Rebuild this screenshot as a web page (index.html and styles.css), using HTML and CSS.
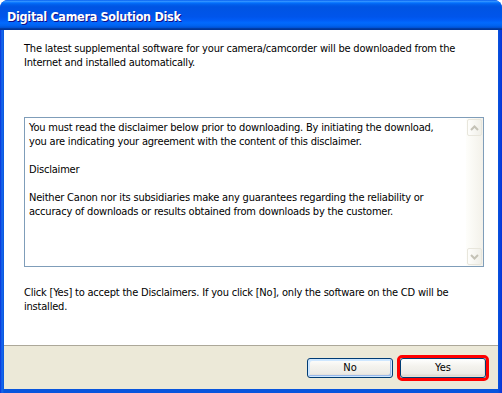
FILE: index.html
```html
<!DOCTYPE html>
<html lang="en">
<head>
    <meta charset="UTF-8">
    <meta name="viewport" content="width=device-width, initial-scale=1.0">
    <title>Digital Camera Solution Disk</title>
    <link rel="stylesheet" href="styles.css">
</head>
<body>
    <div class="window">
        <!-- title bar -->
        <div class="titlebar">
            <span class="title">Digital Camera Solution Disk</span>
        </div>

        <div class="frame">
            <div class="content">
                <p class="intro">The latest supplemental software for your camera/camcorder will be downloaded from the Internet and installed automatically.</p>

                <!-- disclaimer box -->
                <div class="textbox">
                    <div class="textbox-text">
                        <p>You must read the disclaimer below prior to downloading. By initiating the download, you are indicating your agreement with the content of this disclaimer.</p>
                        <p>Disclaimer</p>
                        <p>Neither Canon nor its subsidiaries make any guarantees regarding the reliability or accuracy of downloads or results obtained from downloads by the customer.</p>
                    </div>
                    <div class="scrollbar">
                        <span class="arrow">
                            <svg width="9" height="6" viewBox="0 0 9 6"><polyline points="1,5 4.5,1.5 8,5" fill="none" stroke="#c4c2b6" stroke-width="2"/></svg>
                        </span>
                        <span class="track"></span>
                        <span class="arrow">
                            <svg width="9" height="6" viewBox="0 0 9 6"><polyline points="1,1 4.5,4.5 8,1" fill="none" stroke="#c4c2b6" stroke-width="2"/></svg>
                        </span>
                    </div>
                </div>

                <p class="note">Click [Yes] to accept the Disclaimers. If you click [No], only the software on the CD will be installed.</p>
            </div>

            <!-- buttons -->
            <div class="footer">
                <button class="btn btn-default">No</button>
                <span class="highlight">
                    <button class="btn">Yes</button>
                </span>
            </div>
        </div>
    </div>
</body>
</html>
```

FILE: styles.css
```css
body {
    margin: 0;
    background-color: #fff;
    font-family: "DejaVu Sans Condensed", "Liberation Sans", sans-serif;
    font-size: 11px;
    letter-spacing: -0.2px;
    color: #000;
}

.window {
    width: 502px;
    height: 393px;
    display: flex;
    flex-direction: column;
    border-radius: 8px 8px 0 0;
    overflow: hidden;
    background-color: #0841d9;
}

.titlebar {
    height: 30px;
    flex: none;
    display: flex;
    align-items: center;
    padding-left: 7px;
    background: linear-gradient(180deg, #0058ee 0%, #3593ff 4%, #288eff 6%, #127dff 8%, #036ffc 10%, #0262ee 14%, #0057e5 20%, #0054e3 24%, #0055eb 56%, #005bf5 66%, #026afe 76%, #0062ef 86%, #0052d6 92%, #0040ab 94%, #003092 100%);
}

.title {
    color: #fff;
    font-family: "DejaVu Sans Condensed", "DejaVu Sans", sans-serif;
    font-weight: bold;
    font-size: 12.5px;
    letter-spacing: -0.3px;
    text-shadow: 1px 1px #0f1089;
    padding-top: 2px;
}

.frame {
    flex: 1;
    display: flex;
    flex-direction: column;
    padding: 0 4px 4px 4px;
    background: linear-gradient(90deg, #0831d9 0, #166aee 2px, #0855dd 4px, #0855dd calc(100% - 4px), #0831d9 100%);
}

.content {
    height: 316px;
    box-sizing: border-box;
    background-color: #fff;
    border-bottom: 1px solid #aca899;
    padding: 12px 14px 0 20px;
}

.content p {
    margin: 0;
    line-height: 14px;
}

.intro {
    margin-bottom: 47px !important;
}

.textbox {
    height: 150px;
    box-sizing: border-box;
    border: 1px solid #7f9db9;
    display: flex;
    margin-bottom: 19px;
}

.textbox-text {
    flex: 1;
    padding: 3px 24px 3px 4px;
}

.textbox-text p {
    margin-bottom: 14px;
}

.scrollbar {
    width: 17px;
    display: flex;
    flex-direction: column;
    background: linear-gradient(90deg, #fefefb, #f3f1ea);
}

.arrow {
    height: 15px;
    margin: 1px 1px;
    border: 1px solid #e8e6dc;
    border-radius: 2px;
    background: linear-gradient(90deg, #fefefc, #f0efe8);
    display: flex;
    align-items: center;
    justify-content: center;
}

.track {
    flex: 1;
}

.footer {
    flex: 1;
    display: flex;
    justify-content: flex-end;
    align-items: center;
    gap: 4px;
    padding-right: 9px;
    background-color: #ece9d8;
}

.btn {
    width: 86px;
    height: 20px;
    padding: 0;
    font-family: inherit;
    font-size: 11px;
    color: #000;
    border: 1px solid #003c74;
    border-radius: 3px;
    background: linear-gradient(180deg, #fff 0%, #f4f3ee 40%, #ecebe6 80%, #d6d0c5 100%);
    box-shadow: inset -1px -1px #e3e1d6;
}

.btn-default {
    box-shadow: inset 0 0 0 1px #cee7ff, inset -2px -2px #98b8ea, inset 2px 2px #cee7ff;
}

.highlight {
    display: flex;
    border: 3px solid #f00;
    border-radius: 5px;
}
```
